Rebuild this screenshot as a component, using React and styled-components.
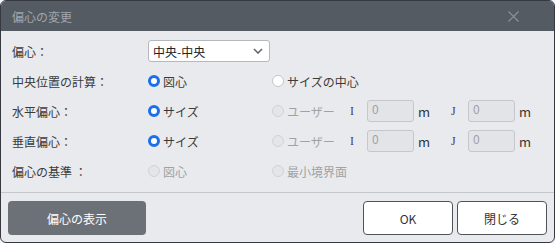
import { createGlobalStyle } from "styled-components";
import styled from "styled-components";

const GlobalStyle = createGlobalStyle`
	html, body {
		margin: 0;
		padding: 0;
		background: #f4f5f7;
	}
	body {
		font-family: "Noto Sans CJK JP", "Noto Sans", sans-serif;
		font-size: 12px;
		color: #333333;
	}
`;

export default function App() {
	return (
		<>
			<GlobalStyle />
			<Dialog>
				<TitleBar>
					<Title>偏心の変更</Title>
					<CloseButton aria-label="close">
						<svg width="11" height="11" viewBox="0 0 11 11">
							<path d="M0.5 0.5 L10.5 10.5 M10.5 0.5 L0.5 10.5" stroke="#8d9298" strokeWidth="1.2" />
						</svg>
					</CloseButton>
				</TitleBar>

				<Form>
					<Label>偏心：</Label>
					<Cell $span>
						<Select>
							<span>中央-中央</span>
							<svg width="10" height="6" viewBox="0 0 10 6">
								<path d="M1 1 L5 5 L9 1" stroke="#666" strokeWidth="1.6" fill="none" />
							</svg>
						</Select>
					</Cell>

					<Label>中央位置の計算：</Label>
					<Cell>
						<Option checked>図心</Option>
					</Cell>
					<Cell>
						<Option>サイズの中心</Option>
					</Cell>

					<Label>水平偏心：</Label>
					<Cell>
						<Option checked>サイズ</Option>
					</Cell>
					<Cell>
						<UserGroup />
					</Cell>

					<Label>垂直偏心：</Label>
					<Cell>
						<Option checked>サイズ</Option>
					</Cell>
					<Cell>
						<UserGroup />
					</Cell>

					<Label>偏心の基準 ：</Label>
					<Cell>
						<Option disabled>図心</Option>
					</Cell>
					<Cell>
						<Option disabled>最小境界面</Option>
					</Cell>
				</Form>

				<Footer>
					<ShowButton>偏心の表示</ShowButton>
					<Actions>
						<PlainButton>OK</PlainButton>
						<PlainButton>閉じる</PlainButton>
					</Actions>
				</Footer>
			</Dialog>
		</>
	);
}

function Option({ checked, disabled, children }) {
	return (
		<OptionLabel $disabled={disabled}>
			<Radio $checked={checked} $disabled={disabled} />
			{children}
		</OptionLabel>
	);
}

function UserGroup() {
	return (
		<Inline>
			<UserOption>
				<Option disabled>ユーザー</Option>
			</UserOption>
			<Axis>I</Axis>
			<NumberBox>0</NumberBox>
			<Unit>m</Unit>
			<Axis>J</Axis>
			<NumberBox>0</NumberBox>
			<Unit>m</Unit>
		</Inline>
	);
}

// UI
const Dialog = styled.div`
	box-sizing: border-box;
	width: 555px;
	height: 243px;
	border: 1px solid #363a40;
	border-radius: 6px;
	overflow: hidden;
	background: #e9eaed;
	display: flex;
	flex-direction: column;
`;

const TitleBar = styled.div`
	height: 30px;
	background: #555b63;
	display: flex;
	align-items: center;
	justify-content: space-between;
	padding: 0 35px 0 11px;
`;

const Title = styled.div`
	color: #a1a5ab;
	font-size: 12px;
`;

const CloseButton = styled.div`
	display: flex;
	align-items: center;
	margin-top: 1px;
`;

const Form = styled.div`
	display: grid;
	grid-template-columns: 136px 124px 1fr;
	grid-auto-rows: 30px;
	padding: 5px 0 6px 11px;
`;

const Label = styled.div`
	display: flex;
	align-items: center;
	color: #3a3a3a;
	white-space: pre;
`;

const Cell = styled.div`
	display: flex;
	align-items: center;
	grid-column: ${(p) => (p.$span ? "2 / 4" : "auto")};
`;

const Select = styled.div`
	box-sizing: border-box;
	width: 122px;
	height: 22px;
	background: #ffffff;
	border: 1px solid #b5b9be;
	border-radius: 3px;
	display: flex;
	align-items: center;
	justify-content: space-between;
	padding: 0 6px 0 4px;
	color: #222;
`;

const OptionLabel = styled.label`
	display: flex;
	align-items: center;
	gap: 3px;
	color: ${(p) => (p.$disabled ? "#9ea2a7" : "#3a3a3a")};
`;

const Radio = styled.span`
	box-sizing: border-box;
	width: 12px;
	height: 12px;
	border-radius: 50%;
	background: ${(p) => (p.$disabled ? "#e4e5e8" : "#ffffff")};
	border: ${(p) =>
		p.$checked ? "3px solid #1b6fe8" : p.$disabled ? "1px solid #cfd2d6" : "1px solid #c3c6cb"};
`;

const Inline = styled.div`
	display: flex;
	align-items: center;
`;

const UserOption = styled.div`
	width: 78px;
`;

const Axis = styled.span`
	width: 17px;
	color: #4a3d5c;
	font-family: "Liberation Serif", serif;
	font-size: 12px;
`;

const NumberBox = styled.div`
	box-sizing: border-box;
	width: 47px;
	height: 22px;
	border: 1px solid #c4c7cb;
	border-radius: 3px;
	background: #e3e4e7;
	color: #9ea2a7;
	padding: 0 4px;
	line-height: 16px;
`;

const Unit = styled.span`
	width: 37px;
	padding-left: 4px;
	box-sizing: border-box;
	font-size: 13px;
	color: #333;
`;

const Footer = styled.div`
	border-top: 1px solid #c3c7cc;
	display: flex;
	justify-content: space-between;
	align-items: center;
	padding: 8px 7px 0 7px;
`;

const ShowButton = styled.div`
	width: 138px;
	height: 34px;
	border-radius: 4px;
	background: #6c7178;
	color: #ffffff;
	display: flex;
	align-items: center;
	justify-content: center;
	font-size: 12px;
`;

const Actions = styled.div`
	display: flex;
	gap: 4px;
`;

const PlainButton = styled.div`
	box-sizing: border-box;
	width: 90px;
	height: 34px;
	border-radius: 4px;
	border: 1px solid #4f5359;
	background: #ffffff;
	color: #333;
	display: flex;
	align-items: center;
	justify-content: center;
	font-size: 12px;
`;
